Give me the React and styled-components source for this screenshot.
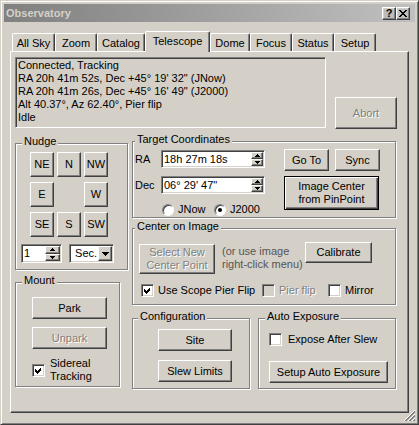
import React from "react";
import styled, { createGlobalStyle, css } from "styled-components";

const GlobalStyle = createGlobalStyle`
  html, body {
    margin: 0;
    padding: 0;
    background: #d4d0c8;
  }
  body {
    font-family: "Liberation Sans", Arial, sans-serif;
    font-size: 11px;
    color: #000;
  }
  * {
    box-sizing: border-box;
  }
`;

const tabs = [
  ["All Sky", 43],
  ["Zoom", 42],
  ["Catalog", 48],
  ["Telescope", 65],
  ["Dome", 40],
  ["Focus", 42],
  ["Status", 42],
  ["Setup", 42],
];

const statusLines = [
  "Connected, Tracking",
  "RA 20h 41m 52s, Dec +45° 19' 32\" (JNow)",
  "RA 20h 41m 26s, Dec +45° 16' 49\" (J2000)",
  "Alt 40.37°, Az 62.40°, Pier flip",
  "Idle",
];

const nudge = ["NE", "N", "NW", "E", "", "W", "SE", "S", "SW"];

const raised = css`
  border: 1px solid;
  border-color: #fff #404040 #404040 #fff;
  box-shadow: inset -1px -1px #808080, inset 1px 1px #d4d0c8;
`;

const sunken = css`
  border: 1px solid;
  border-color: #808080 #fff #fff #808080;
  box-shadow: inset 1px 1px #404040, inset -1px -1px #d4d0c8;
`;

const Window = styled.div`
  position: relative;
  width: 419px;
  height: 425px;
  padding: 3px;
  background: #d4d0c8;
  border: 1px solid;
  border-color: #d4d0c8 #404040 #404040 #d4d0c8;
  box-shadow: inset 1px 1px #fff, inset -1px -1px #808080;
  display: flex;
  flex-direction: column;
`;

const TitleBar = styled.div`
  height: 18px;
  flex-shrink: 0;
  display: flex;
  align-items: center;
  padding: 0 5px 0 2px;
  background: linear-gradient(to right, #808080, #c0c0c0);
`;

const Title = styled.span`
  flex: 1;
  font-weight: bold;
  color: #d4d0c8;
`;

const CaptionButton = styled.div`
  width: 14px;
  height: 13px;
  ${raised};
  display: flex;
  align-items: center;
  justify-content: center;
  font-weight: bold;
  font-size: 11px;
  line-height: 11px;
`;

const TabControl = styled.div`
  margin: 9px 6px 0 6px;
  display: flex;
  flex-direction: column;
`;

const TabStrip = styled.div`
  height: 20px;
  display: flex;
  align-items: flex-end;
  padding-left: 2px;
`;

const Tab = styled.div`
  position: relative;
  z-index: ${(p) => (p.$active ? 2 : 0)};
  width: ${(p) => p.$w}px;
  height: ${(p) => (p.$active ? 21 : 18)}px;
  margin-bottom: ${(p) => (p.$active ? -1 : 0)}px;
  padding-bottom: ${(p) => (p.$active ? 2 : 0)}px;
  background: #d4d0c8;
  border-left: 1px solid #fff;
  border-top: 1px solid #fff;
  border-right: 1px solid #404040;
  border-radius: 2px 2px 0 0;
  box-shadow: inset -1px 0 #808080;
  display: flex;
  align-items: center;
  justify-content: center;
  white-space: nowrap;
`;

const Panel = styled.div`
  position: relative;
  z-index: 1;
  height: 362px;
  padding: 5px 0 0 4px;
  border: 1px solid;
  border-color: #fff #404040 #404040 #fff;
  box-shadow: inset -1px -1px #808080;
`;

const TopRow = styled.div`
  height: 72px;
  display: flex;
  align-items: flex-start;
`;

const StatusBox = styled.div`
  width: 311px;
  height: 71px;
  ${sunken};
  padding: 1px 0 0 2px;
  line-height: 13px;
  white-space: nowrap;
`;

const Btn = styled.button`
  flex-shrink: 0;
  width: ${(p) => p.$w}px;
  height: ${(p) => p.$h || 22}px;
  margin: 0;
  padding: 0;
  font: inherit;
  line-height: 13px;
  color: #000;
  background: #d4d0c8;
  ${raised};
  ${(p) =>
    p.$default &&
    css`
      border-color: #000;
      box-shadow: inset 1px 1px #fff, inset -1px -1px #404040,
        inset -2px -2px #808080;
    `}
  &:disabled {
    color: #808080;
    text-shadow: 1px 1px 0 #fff;
  }
`;

const AbortBtn = styled(Btn)`
  margin: 40px 0 0 9px;
`;

const Main = styled.div`
  display: flex;
  align-items: flex-start;
`;

const Column = styled.div`
  width: ${(p) => p.$w}px;
  margin: ${(p) => p.$top}px 0 0 ${(p) => p.$left || 0}px;
  display: flex;
  flex-direction: column;
  align-items: flex-start;
`;

const Group = styled.div`
  position: relative;
  flex-shrink: 0;
  width: ${(p) => p.$w}px;
  height: ${(p) => p.$h}px;
  margin: ${(p) => p.$top || 0}px 0 0 ${(p) => p.$left || 0}px;
  padding: ${(p) => p.$pad};
  border: 1px solid #808080;
  box-shadow: inset 1px 1px #fff, 1px 1px #fff;
`;

const Caption = styled.span`
  position: absolute;
  top: -9px;
  left: ${(p) => p.$left}px;
  padding: 0 2px;
  line-height: 13px;
  background: #d4d0c8;
  white-space: nowrap;
`;

const NudgeGrid = styled.div`
  margin-left: 9px;
  display: grid;
  grid-template-columns: repeat(3, 24px);
  grid-auto-rows: 25px;
  column-gap: 3px;
  row-gap: 5px;
`;

const NudgeFooter = styled.div`
  margin-top: 7px;
  display: flex;
  gap: 7px;
`;

const Field = styled.div`
  width: ${(p) => p.$w}px;
  height: ${(p) => p.$h}px;
  flex-shrink: 0;
  ${sunken};
  border-width: 1px;
  padding: 1px;
  background: #fff;
  display: flex;
  align-items: stretch;
`;

const FieldText = styled.span`
  flex: 1;
  padding-left: 1px;
  line-height: ${(p) => p.$lh}px;
  white-space: nowrap;
  overflow: hidden;
`;

const SpinColumn = styled.div`
  width: ${(p) => p.$w}px;
  display: flex;
  flex-direction: column;
`;

const SpinButton = styled.div`
  flex: 1;
  background: #d4d0c8;
  ${raised};
  display: flex;
  align-items: center;
  justify-content: center;
`;

const DropButton = styled.div`
  width: 14px;
  background: #d4d0c8;
  ${raised};
  display: flex;
  align-items: center;
  justify-content: center;
`;

const Arrow = ({ up, w = 5, h = 3 }) => (
  <svg width={w} height={h} viewBox={`0 0 ${w} ${h}`} shapeRendering="crispEdges">
    <polygon
      points={up ? `${w / 2},0 ${w},${h} 0,${h}` : `0,0 ${w},0 ${w / 2},${h}`}
      fill="#000"
    />
  </svg>
);

const Spinner = ({ w, h, text, spinW }) => (
  <Field $w={w} $h={h}>
    <FieldText $lh={h - 4}>{text}</FieldText>
    <SpinColumn $w={spinW}>
      <SpinButton>
        <Arrow up />
      </SpinButton>
      <SpinButton>
        <Arrow />
      </SpinButton>
    </SpinColumn>
  </Field>
);

const CheckRow = styled.label`
  display: flex;
  align-items: center;
  gap: ${(p) => p.$gap || 5}px;
  margin: ${(p) => p.$margin || 0};
  line-height: 13px;
  white-space: nowrap;
  color: ${(p) => (p.$disabled ? "#808080" : "#000")};
  text-shadow: ${(p) => (p.$disabled ? "1px 1px 0 #fff" : "none")};
`;

const Box = styled.span`
  flex-shrink: 0;
  width: 13px;
  height: 13px;
  ${sunken};
  background: ${(p) => (p.$disabled ? "#d4d0c8" : "#fff")};
  display: flex;
  align-items: center;
  justify-content: center;
`;

const Check = ({ checked, disabled, children, gap, margin }) => (
  <CheckRow $disabled={disabled} $gap={gap} $margin={margin}>
    <Box $disabled={disabled}>
      {checked && (
        <svg width="7" height="7" viewBox="0 0 7 7" shapeRendering="crispEdges">
          <polygon points="0,2 2,4 6,0 6,3 2,7 0,5" fill="#000" />
        </svg>
      )}
    </Box>
    <span>{children}</span>
  </CheckRow>
);

const Radio = styled.span`
  position: relative;
  flex-shrink: 0;
  width: 12px;
  height: 12px;
  border-radius: 50%;
  border: 1px solid;
  border-color: #808080 #fff #fff #808080;
  box-shadow: inset 1px 1px #404040;
  background: #fff;
  ${(p) =>
    p.$on &&
    css`
      &::after {
        content: "";
        position: absolute;
        left: 3px;
        top: 3px;
        width: 4px;
        height: 4px;
        border-radius: 50%;
        background: #000;
      }
    `}
`;

const RadioRow = styled.div`
  margin: 9px 0 0 27px;
  display: grid;
  grid-template-columns: 52px auto;
  line-height: 13px;
`;

const RadioItem = styled.label`
  display: flex;
  align-items: center;
  gap: 4px;
`;

const CoordFields = styled.div`
  width: 132px;
  padding: 8px 0 0 2px;
  display: flex;
  flex-direction: column;
`;

const CoordRow = styled.div`
  display: flex;
  align-items: center;
  margin-top: ${(p) => p.$top || 0}px;
`;

const CoordLabel = styled.span`
  width: 26px;
  line-height: 13px;
`;

const CoordActions = styled.div`
  margin: 7px 0 0 19px;
  display: flex;
  flex-direction: column;
  gap: 5px;
`;

const ButtonPair = styled.div`
  display: flex;
  gap: 6px;
`;

const GroupRow = styled.div`
  display: flex;
  align-items: flex-start;
`;

const CenterRow = styled.div`
  display: flex;
  align-items: flex-start;
  padding: 13px 0 0 6px;
`;

const Note = styled.div`
  width: 83px;
  margin: 3px 0 0 7px;
  line-height: 13px;
  color: #555;
  white-space: nowrap;
`;

const CheckLine = styled.div`
  margin: 10px 0 0 8px;
  display: grid;
  grid-template-columns: 121px 66px auto;
`;

const Stack = styled.div`
  display: flex;
  flex-direction: column;
  align-items: flex-start;
  gap: ${(p) => p.$gap}px;
  padding: ${(p) => p.$pad};
`;

const Grip = styled.svg`
  position: absolute;
  right: 3px;
  bottom: 3px;
`;

export default function App() {
  return (
    <>
      <GlobalStyle />
      <Window>
        <TitleBar>
          <Title>Observatory</Title>
          <CaptionButton>?</CaptionButton>
          <CaptionButton>
            <svg width="8" height="7" viewBox="0 0 8 7" shapeRendering="crispEdges">
              <path d="M0 0h2l2 2.5L6 0h2L5 3.5 8 7H6L4 4.5 2 7H0l3-3.5z" fill="#000" />
            </svg>
          </CaptionButton>
        </TitleBar>

        <TabControl>
          <TabStrip>
            {tabs.map(([name, w]) => (
              <Tab key={name} $w={w} $active={name === "Telescope"}>
                {name}
              </Tab>
            ))}
          </TabStrip>

          <Panel>
            <TopRow>
              <StatusBox>
                {statusLines.map((line) => (
                  <div key={line}>{line}</div>
                ))}
              </StatusBox>
              <AbortBtn $w={62} $h={32} disabled>
                Abort
              </AbortBtn>
            </TopRow>

            <Main>
              <Column $w={113} $top={14}>
                <Group $w={113} $h={127} $pad="8px 0 0 5px">
                  <Caption $left={6}>Nudge</Caption>
                  <NudgeGrid>
                    {nudge.map((dir, i) =>
                      dir ? (
                        <Btn key={dir} $w={24} $h={25}>
                          {dir}
                        </Btn>
                      ) : (
                        <span key={i} />
                      )
                    )}
                  </NudgeGrid>
                  <NudgeFooter>
                    <Spinner w={41} h={19} text="1" spinW={15} />
                    <Field $w={45} $h={19}>
                      <FieldText $lh={15}>&nbsp;Sec.</FieldText>
                      <DropButton>
                        <Arrow w={7} h={4} />
                      </DropButton>
                    </Field>
                  </NudgeFooter>
                </Group>

                <Group $w={105} $h={105} $top={12}>
                  <Caption $left={6}>Mount</Caption>
                  <Stack $gap={8} $pad="14px 0 0 16px">
                    <Btn $w={75}>Park</Btn>
                    <Btn $w={75} disabled>
                      Unpark
                    </Btn>
                  </Stack>
                  <Check checked margin="8px 0 0 16px">
                    Sidereal
                    <br />
                    Tracking
                  </Check>
                </Group>
              </Column>

              <Column $w={264} $top={12} $left={4}>
                <Group $w={264} $h={77}>
                  <Caption $left={2}>Target Coordinates</Caption>
                  <GroupRow>
                    <CoordFields>
                      <CoordRow>
                        <CoordLabel>RA</CoordLabel>
                        <Spinner w={104} h={18} text="18h 27m 18s" spinW={12} />
                      </CoordRow>
                      <CoordRow $top={8}>
                        <CoordLabel>Dec</CoordLabel>
                        <Spinner w={104} h={18} text={"06° 29' 47\""} spinW={12} />
                      </CoordRow>
                      <RadioRow>
                        <RadioItem>
                          <Radio />
                          JNow
                        </RadioItem>
                        <RadioItem>
                          <Radio $on />
                          J2000
                        </RadioItem>
                      </RadioRow>
                    </CoordFields>
                    <CoordActions>
                      <ButtonPair>
                        <Btn $w={45}>Go To</Btn>
                        <Btn $w={45}>Sync</Btn>
                      </ButtonPair>
                      <Btn $w={95} $h={34} $default>
                        Image Center
                        <br />
                        from PinPoint
                      </Btn>
                    </CoordActions>
                  </GroupRow>
                </Group>

                <Group $w={264} $h={77} $top={10}>
                  <Caption $left={2}>Center on Image</Caption>
                  <CenterRow>
                    <Btn $w={76} $h={30} style={{ marginTop: 2 }} disabled>
                      Select New
                      <br />
                      Center Point
                    </Btn>
                    <Note>
                      (or use image
                      <br />
                      right-click menu)
                    </Note>
                    <Btn $w={67} $h={21}>
                      Calibrate
                    </Btn>
                  </CenterRow>
                  <CheckLine>
                    <Check checked gap={4}>
                      Use Scope Pier Flip
                    </Check>
                    <Check disabled gap={4}>
                      Pier flip
                    </Check>
                    <Check gap={4}>Mirror</Check>
                  </CheckLine>
                </Group>

                <GroupRow>
                  <Group $w={118} $h={71} $top={13}>
                    <Caption $left={5}>Configuration</Caption>
                    <Stack $gap={9} $pad="10px 0 0 25px">
                      <Btn $w={74}>Site</Btn>
                      <Btn $w={74}>Slew Limits</Btn>
                    </Stack>
                  </Group>
                  <Group $w={138} $h={71} $top={13} $left={8}>
                    <Caption $left={6}>Auto Exposure</Caption>
                    <Stack $gap={15} $pad="14px 0 0 10px">
                      <Check gap={6}>Expose After Slew</Check>
                      <Btn $w={119}>Setup Auto Exposure</Btn>
                    </Stack>
                  </Group>
                </GroupRow>
              </Column>
            </Main>
          </Panel>
        </TabControl>

        <Grip width="12" height="12" viewBox="0 0 12 12" shapeRendering="crispEdges">
          {[0, 4, 8].map((o) => (
            <g key={o}>
              <line x1={o + 1} y1="12" x2="12" y2={o + 1} stroke="#fff" />
              <line x1={o + 2} y1="12" x2="12" y2={o + 2} stroke="#808080" />
              <line x1={o + 3} y1="12" x2="12" y2={o + 3} stroke="#808080" />
            </g>
          ))}
        </Grip>
      </Window>
    </>
  );
}
